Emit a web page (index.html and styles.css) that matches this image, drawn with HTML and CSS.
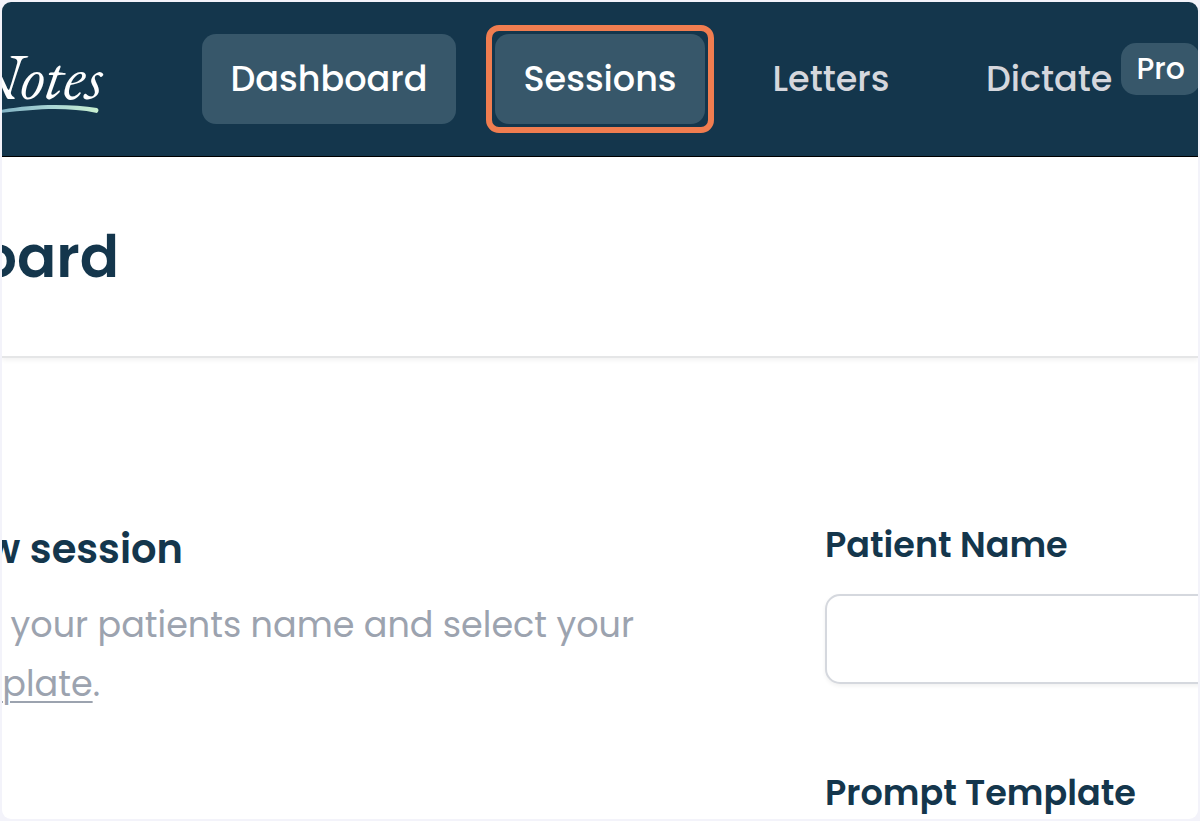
FILE: index.html
```html
<!DOCTYPE html>
<html lang="en">
<head>
<meta charset="utf-8">
<meta name="viewport" content="width=device-width, initial-scale=1">
<title>Dashboard</title>
<link rel="stylesheet" href="styles.css">
</head>
<body>
<div class="frame">
  <header class="topbar">
    <a class="brand" href="#">
      <span class="brand-name">Notes</span>
      <svg class="brand-line" viewBox="0 0 120 10" aria-hidden="true">
        <defs>
          <linearGradient id="swoosh" x1="0" x2="1" y1="0" y2="0">
            <stop offset="0" stop-color="#6fa3bd"/>
            <stop offset="0.6" stop-color="#a9d5d5"/>
            <stop offset="1" stop-color="#c9f0d0"/>
          </linearGradient>
        </defs>
        <path d="M0 9 C30 3 50 0 76 0 C92 0 106 1 118 3 Q121 5 118 8 C104 5 90 4 76 4 C52 4 36 7 0 10 Z" fill="url(#swoosh)"/>
      </svg>
    </a>
    <nav class="nav">
      <a class="nav-link active" href="#">Dashboard</a>
      <a class="nav-link active focused" href="#">Sessions</a>
      <a class="nav-link" href="#">Letters</a>
      <a class="nav-link with-badge" href="#">Dictate <span class="badge">Pro</span></a>
    </nav>
  </header>
  <div class="page-head">
    <h1 class="page-title">Dashboard</h1>
  </div>
  <main class="content">
    <section class="intro">
      <h2 class="intro-title">New session</h2>
      <p class="intro-text">
        <span class="line">Enter your patients name and select your</span>
        <span class="line line-end"><a class="intro-link" href="#">template</a>.</span>
      </p>
    </section>
    <form class="form">
      <label class="label" for="patient">Patient Name</label>
      <input class="input" id="patient" type="text">
      <label class="label" for="template">Prompt Template</label>
      <select class="input" id="template"></select>
    </form>
  </main>
</div>
</body>
</html>
```
FILE: styles.css
```css
* {
  box-sizing: border-box;
}

body {
  margin: 0;
  padding: 2px;
  height: 100vh;
  overflow: hidden;
  background: #f3f3fa;
  color: #14364c;
  font-family: Poppins, Inter, sans-serif;
}

.frame {
  height: 100%;
  overflow: hidden;
  border-radius: 9px;
  background: #fff;
}

.topbar {
  display: flex;
  align-items: center;
  height: 155px;
  border-bottom: 1px solid #000;
  background: #14364c;
}

.brand {
  display: flex;
  flex: none;
  flex-direction: column;
  align-items: flex-end;
  width: 101px;
  padding-top: 6px;
  color: #fff;
  text-decoration: none;
}

.brand-name {
  font: italic 64px/56px "EB Garamond", "Liberation Serif", serif;
}

.brand-line {
  width: 120px;
  height: 10px;
  margin-right: 4px;
}

.nav {
  display: grid;
  flex: none;
  grid-template-columns: 254px 210px 174px auto;
  gap: 39px;
  margin-left: 99px;
}

.nav-link {
  display: flex;
  align-items: center;
  justify-content: center;
  height: 90px;
  border-radius: 14px;
  color: #d5d7dd;
  font-size: 35px;
  font-weight: 500;
  line-height: 54px;
  text-decoration: none;
}

.active {
  background: #37576a;
  color: #fff;
}

.focused {
  position: relative;
}

.focused::after {
  content: "";
  position: absolute;
  inset: -9px;
  border: 6px solid #f07d50;
  border-radius: 13px;
}

.with-badge {
  gap: 9px;
  padding-left: 29px;
}

.badge {
  margin-bottom: 20px;
  padding: 0 15px;
  border-radius: 15px;
  background: #37576a;
  color: #fff;
  font-size: 30px;
  line-height: 52px;
}

.page-head {
  display: flex;
  align-items: center;
  height: 201px;
  border-bottom: 2px solid #e5e6e7;
  box-shadow: 0 2px 5px rgba(0, 0, 0, 0.06);
}

.page-title {
  display: flex;
  justify-content: flex-end;
  width: 117px;
  margin: 0;
  font-size: 58px;
  font-weight: 600;
  line-height: 80px;
}

.content {
  display: grid;
  grid-template-columns: 632px 1fr;
  gap: 191px;
  padding-top: 161px;
}

.intro-title {
  display: flex;
  justify-content: flex-end;
  width: 181px;
  margin: 0 0 16px;
  font-size: 40px;
  font-weight: 600;
  line-height: 60px;
  white-space: nowrap;
}

.intro-text {
  margin: 0;
  color: #9ca3af;
  font-size: 35px;
  line-height: 59px;
  white-space: nowrap;
}

.line {
  display: flex;
  justify-content: flex-end;
}

.line-end {
  width: 98px;
}

.intro-link {
  color: inherit;
  text-decoration-thickness: 2px;
  text-underline-offset: 5px;
}

.form {
  display: flex;
  flex-direction: column;
  min-width: 0;
}

.label {
  margin-bottom: 23px;
  font-size: 35px;
  font-weight: 600;
  line-height: 52px;
}

.input {
  height: 90px;
  margin: 0 -20px 83px 0;
  border: 2px solid #d5d8de;
  border-radius: 15px;
  background: #fff;
  box-shadow: 0 2px 4px rgba(0, 0, 0, 0.06);
  font: inherit;
}
```
